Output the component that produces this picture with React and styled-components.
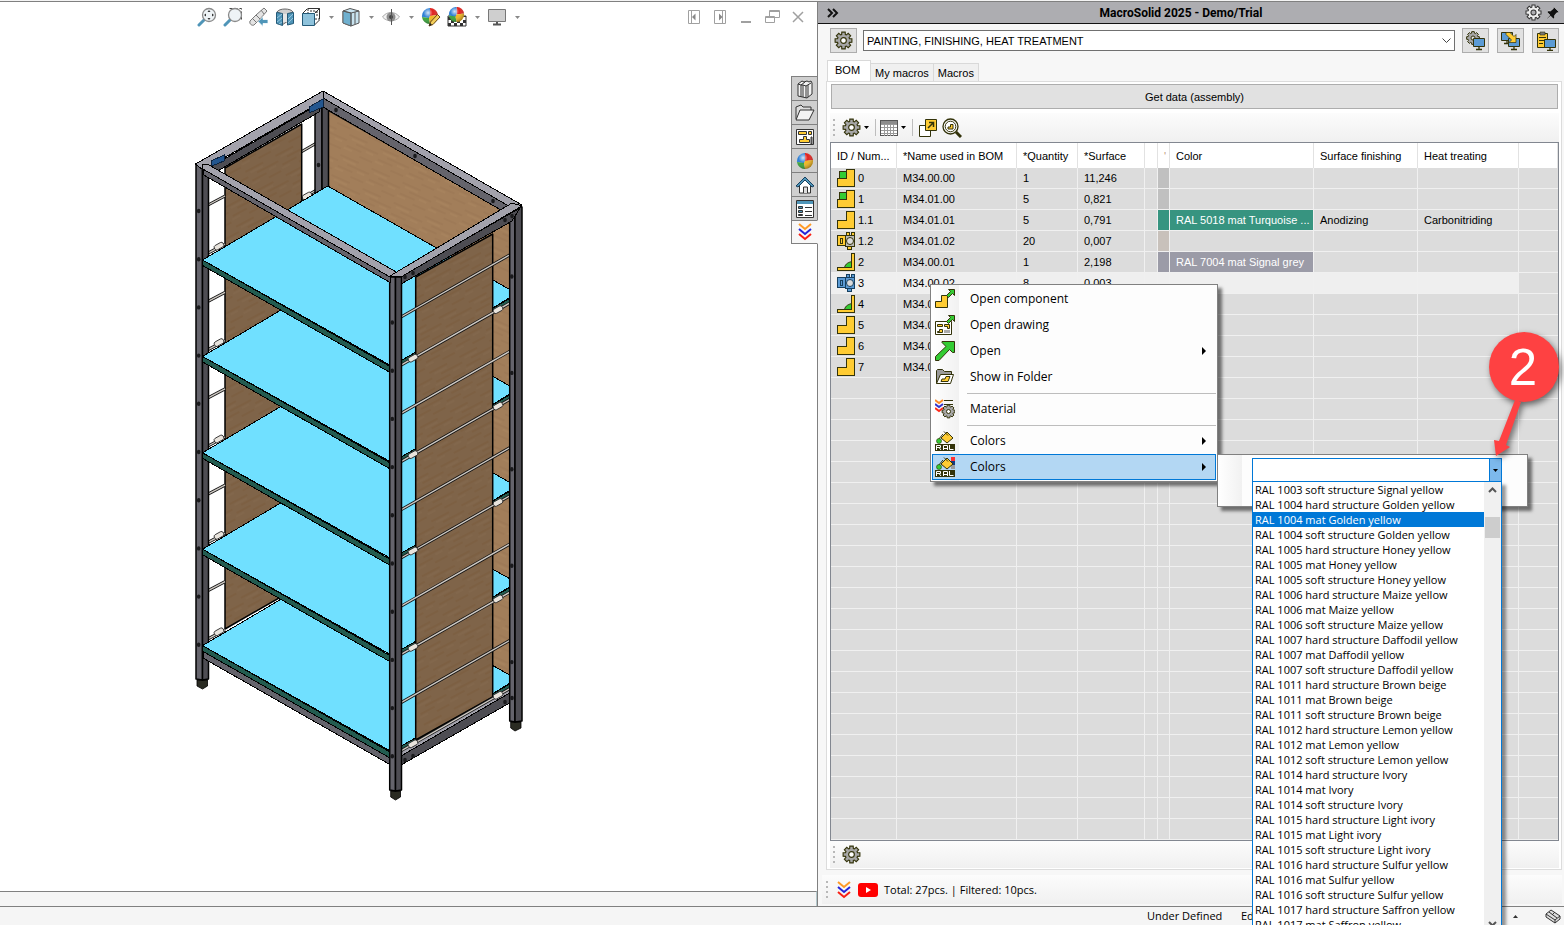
import React from "react";
import styled, { createGlobalStyle, css } from "styled-components";

const ui = '"Open Sans", "Noto Sans", sans-serif';
const sans = '"Liberation Sans", Arial, sans-serif';

const GlobalStyle = createGlobalStyle`
  * { box-sizing: border-box; }
  body { margin: 0; background: #fff; font: 11px/16px ${sans}; color: #000; }
  button, input, select { font: inherit; color: inherit; margin: 0; border-radius: 0; }
  svg { display: block; flex: none; }
`;

const App_ = styled.div`
  height: 100vh;
  display: grid;
  grid-template-rows: minmax(0, 1fr) 19px;
  overflow: hidden;
`;
const Main = styled.main`
  display: grid;
  grid-template-columns: minmax(0, 817fr) minmax(0, 747fr);
  border-top: 1px solid #f4f4f4;
`;

/* ---------- model view ---------- */
const View = styled.section`
  display: flex;
  flex-direction: column;
  min-width: 0;
  border-top: 1px solid #808080;
`;
const ViewBar = styled.div`
  display: flex;
  justify-content: space-between;
  padding: 2px 6px 0 194px;
`;
const Group = styled.div`
  display: flex;
`;
const Plain = styled.button`
  display: flex;
  align-items: center;
  justify-content: center;
  width: ${(p) => p.$w || 26}px;
  height: 26px;
  padding: 0;
  border: 0;
  background: none;
`;
const ViewBody = styled.div`
  flex: 1;
  min-height: 0;
  display: flex;
  justify-content: space-between;
  align-items: flex-start;
`;
const Stage = styled.div`
  padding: 60px 0 0 194px;
`;
const TaskTabs = styled.nav`
  position: relative;
  z-index: 1;
  margin: 46px -1px 0 0;
  width: 27px;
  border-left: 1px solid #808080;
`;
const TaskTab = styled.button`
  display: flex;
  align-items: center;
  justify-content: center;
  width: 100%;
  height: 24px;
  padding: 0;
  border: solid #808080;
  border-width: 1px 1px 0 0;
  background: ${(p) => (p.$on ? "#f7f7f7" : "#cfcfcf")};
  ${(p) => p.$on && css`border-right-color: #f7f7f7; border-bottom-width: 1px;`}
`;
const ViewFoot = styled.div`
  height: 15px;
  border-top: 1px solid #808080;
  border-right: 1px solid #b4c8cc;
  background: #f5f5f5;
`;

/* ---------- side panel ---------- */
const Panel = styled.aside`
  position: relative;
  display: flex;
  flex-direction: column;
  min-width: 0;
  background: #f7f7f7;
  border-left: 1px solid #808080;
  border-top: 1px solid #808080;
`;
const PanelHead = styled.header`
  display: flex;
  align-items: center;
  height: 22px;
  padding: 0 1px 0 9px;
  background: #adadb1;
  border-bottom: 1px solid #111;
`;
const PanelTitle = styled.h1`
  flex: 1;
  margin: 0;
  text-align: center;
  font: 700 12px/18px Roboto, ${ui};
`;
const HeadButton = styled(Plain)`
  width: 20px;
  height: 20px;
`;
const PickRow = styled.div`
  display: flex;
  align-items: center;
  gap: 8px;
  padding: 4px 5px 7px 12px;
`;
const IconButton = styled.button`
  display: flex;
  align-items: center;
  justify-content: center;
  width: 27px;
  height: 25px;
  padding: 0;
  border: 1px solid #adadad;
  background: #e1e1e1;
`;
const SelectBox = styled.div`
  flex: 1;
  display: grid;
  align-items: center;
  margin: 0 -1px 0 -2px;
  > * { grid-area: 1 / 1; }
  > svg { justify-self: end; margin-right: 4px; pointer-events: none; }
`;
const Select = styled.select`
  appearance: none;
  width: 100%;
  height: 21px;
  padding: 0 3px;
  border: 1px solid #707070;
  background: #fff;
  font: 11px/18px ${sans};
`;
const Tabs = styled.div`
  display: flex;
  align-items: flex-end;
  padding-left: 9px;
  height: 21px;
  position: relative;
  z-index: 1;
`;
const Tab = styled.button`
  height: ${(p) => (p.$on ? 21 : 18)}px;
  padding: ${(p) => (p.$on ? "0 10px 2px 7px" : "0 4px")};
  border: solid #d9d9d9;
  border-width: 1px 1px 0 ${(p) => (p.$on ? 1 : 0)}px;
  background: ${(p) => (p.$on ? "#fff" : "#f0f0f0")};
  white-space: nowrap;
`;
const TabPage = styled.div`
  flex: 1;
  min-height: 0;
  display: flex;
  flex-direction: column;
  margin: 0 2px 0 8px;
  padding: 2px 2px 1px 3px;
  border: 1px solid #dcdcdc;
  background: #fff;
`;
const WideButton = styled.button`
  flex: none;
  height: 25px;
  margin: 0 1px;
  padding: 0;
  border: 1px solid #adadad;
  background: #e1e1e1;
`;
const ToolStrip = styled.div`
  flex: none;
  display: flex;
  align-items: center;
  height: ${(p) => p.$h}px;
  margin-top: ${(p) => p.$mt || 0}px;
  padding-left: 3px;
  background: linear-gradient(#fcfcfc, #f0f0f0);
`;
const Grip = styled.i`
  width: 2px;
  height: 17px;
  margin-right: 6px;
  background: repeating-linear-gradient(#b8b8b8 0 2px, transparent 2px 5px);
`;
const Divider = styled.i`
  width: 1px;
  height: 17px;
  margin: 0 4px;
  background: #bdbdbd;
`;
const GridFrame = styled.div`
  flex: 1;
  min-height: 0;
  overflow: hidden;
  border: 1px solid #828790;
  background: #dcdcdc;
`;
const Grid = styled.table`
  width: 100%;
  table-layout: fixed;
  border-collapse: separate;
  border-spacing: 0;
  line-height: 16px;
`;
const Th = styled.th`
  height: 25px;
  padding: 0 0 0 6px;
  border-right: 1px solid #e2e2e2;
  background: #fff;
  font-weight: 400;
  text-align: left;
  white-space: nowrap;
  overflow: hidden;
  color: ${(p) => (p.$faint ? "#c09a80" : "inherit")};
`;
const Td = styled.td`
  height: 21px;
  padding: 0 0 0 6px;
  border: solid #f0f0f0;
  border-width: 0 1px 1px 0;
  background: ${(p) => p.$bg || (p.$sel ? "#efefef" : "#dcdcdc")};
  color: ${(p) => p.$fg || "#000"};
  white-space: nowrap;
  overflow: hidden;
  &:last-child { border-right: 0; }
`;
const IdCell = styled.div`
  display: flex;
  align-items: center;
  gap: 3px;
`;
const Strip = styled.footer`
  display: flex;
  align-items: center;
  gap: 2px;
  height: 29px;
  margin: 5px 2px 2px 4px;
  padding-left: 4px;
  background: linear-gradient(#fcfcfc, #f0f0f0);
  font: 11px/16px ${ui};
`;

/* ---------- popups ---------- */
const Menu = styled.div`
  position: absolute;
  left: 112px;
  top: 282px;
  width: 288px;
  padding: 1px;
  border: 1px solid #808080;
  background: linear-gradient(90deg, #fff, #f1f1f1 28px, #fdfdfd 28px);
  box-shadow: 4px 4px 3px rgba(0, 0, 0, 0.5);
  font: 12px/24px ${ui};
`;
const MenuItem = styled.button`
  display: flex;
  align-items: center;
  width: 100%;
  height: 26px;
  padding: 0 8px 0 2px;
  border: 1px solid ${(p) => (p.$on ? "#0078d7" : "transparent")};
  background: ${(p) => (p.$on ? "#b3d7f3" : "none")};
  text-align: left;
  white-space: nowrap;
  > span { flex: 1; margin-left: 15px; }
`;
const MenuLine = styled.hr`
  height: 6px;
  margin: 0 0 0 35px;
  border: 0;
  background: linear-gradient(transparent 3px, #bdbdbd 3px 4px, transparent 4px);
`;
const SubMenu = styled.div`
  position: absolute;
  left: 286px;
  bottom: -26px;
  width: 311px;
  height: 53px;
  padding: 3px 25px 0 34px;
  border: 1px solid #808080;
  background: linear-gradient(90deg, #fff, #f1f1f1 24px, #fdfdfd 24px);
  box-shadow: 4px 4px 3px rgba(0, 0, 0, 0.5);
`;
const Combo = styled.div`
  position: relative;
  display: flex;
  height: 24px;
  border: 1px solid #0078d7;
  background: #fff;
`;
const ComboInput = styled.input`
  flex: 1;
  min-width: 0;
  padding: 0 3px;
  border: 0;
  outline: 0;
  background: none;
`;
const ComboButton = styled.button`
  display: flex;
  align-items: center;
  justify-content: center;
  width: 12px;
  padding: 0;
  border: 0;
  border-left: 1px solid #0078d7;
  background: #7db9ec;
`;
const DropList = styled.div`
  position: absolute;
  top: 22px;
  left: -1px;
  right: -1px;
  display: flex;
  border: 1px solid #0078d7;
  background: #fff;
  box-shadow: 4px 4px 3px rgba(0, 0, 0, 0.4);
`;
const Options = styled.ul`
  flex: 1;
  margin: 0;
  padding: 0;
  list-style: none;
  font-size: 11px;
`;
const Option = styled.li`
  height: 15px;
  padding-left: 2px;
  line-height: 15px;
  white-space: nowrap;
  background: ${(p) => (p.$on ? "#0078d7" : "none")};
  color: ${(p) => (p.$on ? "#fff" : "#000")};
`;
const Scroll = styled.div`
  display: flex;
  flex-direction: column;
  align-items: center;
  width: 17px;
  padding: 5px 1px;
  background: #f0f0f0;
`;
const Thumb = styled.i`
  width: 15px;
  height: 21px;
  margin: 24px 0 auto;
  background: #cdcdcd;
`;
const Callout = styled.svg`
  position: absolute;
  right: -37px;
  bottom: 46px;
  overflow: visible;
  pointer-events: none;
  filter: drop-shadow(2px 3px 3px rgba(0, 0, 0, 0.55));
`;

const Status = styled.footer`
  display: flex;
  align-items: center;
  justify-content: flex-end;
  gap: 26px;
  padding-right: 2px;
  border-top: 1px solid #808080;
  background: #f5f5f5;
  font: 11px/16px ${ui};
`;
const StatusTexts = styled.div`
  display: grid;
  grid-template-columns: 76px 246px;
  gap: 18px;
  white-space: nowrap;
`;

/* ---------- icons ---------- */
const INK = "#33330a";
const gear = (c, ro, ri, n = 8) => {
  const pts = [];
  for (let i = 0; i < n; i++) {
    const a = (i * 2 * Math.PI) / n;
    [[-0.3, ri], [-0.2, ro], [0.2, ro], [0.3, ri]].forEach(([d, r]) =>
      pts.push(`${(c + r * Math.sin(a + d)).toFixed(2)} ${(c - r * Math.cos(a + d)).toFixed(2)}`)
    );
  }
  return `M${pts.join("L")}Z`;
};
const Gear = ({ s = 20, fill = "#a6a6a6", ink = INK, hole = "#fff" }) => (
  <svg width={s} height={s} viewBox="0 0 20 20">
    <path d={gear(10, 9, 6.6)} fill={fill} stroke={ink} strokeWidth="1.2" />
    <circle cx="10" cy="10" r="3" fill={hole} stroke={ink} strokeWidth="1.2" />
  </svg>
);
const Down = ({ c = "#000" }) => (
  <svg width="5" height="3"><path d="M0 0h5L2.5 3z" fill={c} /></svg>
);
const RightTri = () => (
  <svg width="5" height="8"><path d="M0 0l4 4-4 4z" /></svg>
);
const Chevrons = ({ w = 16, h = 18 }) => (
  <svg width={w} height={h} viewBox="0 0 16 18" fill="none" strokeWidth="2">
    <path d="M2 1l6 5 6-5" stroke="#ff9a26" />
    <path d="M2 6l6 5 6-5" stroke="#2323d8" />
    <path d="M2 11l6 5 6-5" stroke="#f81f14" />
  </svg>
);
const Part = ({ kind }) => (
  <svg width="18" height="18" viewBox="0 0 18 18" stroke={INK} shapeRendering="crispEdges">
    {(kind === "part" || kind === "asm") && <path d="M.5 9.5h9v-9h8v17H.5z" fill="#ffcc33" />}
    {kind === "asm" && <path d="M2.500 2.500h7v7h-7z" fill="#33cc33" />}
    {kind === "weld" && (
      <>
        <path d="M14.500.5h3v17H.5v-3h14z" fill="#ffcc33" />
        <path d="M7.500 14.500c1-4 4-5 7-6v6z" fill="#33cc33" shapeRendering="auto" />
      </>
    )}
    {(kind === "std" || kind === "stdsel") && (
      <g fill={kind === "std" ? "#ffcc33" : "#5b9bd5"} stroke={kind === "std" ? INK : "#17405f"}>
        <path d="M.5 3.500h8v10h-8zM3.500 6.500h2v5h-2zM9.500.5h3v3h-3zM14.500.5h3v3h-3zM10.500 13.500h4v4h-4z" />
        <path d="M8.500 3.500h9v11h-9z" fill={kind === "std" ? "#b9b9b9" : "#5b9bd5"} />
        <circle cx="13" cy="9" r="3.500" fill="#dcdcdc" shapeRendering="auto" />
      </g>
    )}
  </svg>
);
const TableIcon = () => (
  <svg width="18" height="18" shapeRendering="crispEdges">
    <path d="M.5 1.500h17v15H.5z" fill="#fff" stroke="#555" />
    <path d="M1 2h16v3H1z" fill="#8c8c8c" />
    <path d="M1 5.500h16M1 8.500h16M1 11.500h16M1 14.500h16M4.500 5v12M7.500 5v12M10.500 5v12M13.500 5v12" stroke="#999" />
  </svg>
);
const ExportIcon = () => (
  <svg width="20" height="20" stroke={INK}>
    <path d="M1.500 7.500h11v11h-11z" fill="#fff" />
    <path d="M7.500 1.500h11v11h-11z" fill="#ffcc33" />
    <path d="M10 10l5-5M11 4.500h4.500V9" fill="none" strokeWidth="1.500" />
  </svg>
);
const FindIcon = () => (
  <svg width="20" height="20" fill="none" stroke={INK}>
    <circle cx="8.500" cy="8.500" r="7.500" fill="#fff" strokeWidth="1.300" />
    <circle cx="8.500" cy="8.500" r="5.300" fill="#fff" />
    <path d="M6 9h2.500V6.500H11V11H6z" fill="#ffcc33" />
    <path d="M14 14l5 5" strokeWidth="3" />
  </svg>
);
const Monitor = ({ x = 0, y = 0 }) => (
  <g transform={`translate(${x} ${y})`} stroke={INK}>
    <path d="M.5.5h11v8H.5z" fill="#5b9bd5" />
    <path d="M6 9v2M3 11.500h6" fill="none" strokeWidth="1.300" />
  </g>
);
const GearPc = () => (
  <svg width="20" height="20">
    <path d={gear(7, 6.500, 5)} fill="#a6a6a6" stroke={INK} />
    <circle cx="7" cy="7" r="2" fill="#e1e1e1" stroke={INK} />
    <Monitor x={7} y={7} />
  </svg>
);
const SwapPc = () => (
  <svg width="20" height="20">
    <Monitor x={0} y={1} />
    <Monitor x={7} y={7} />
    <path d="M5 1.500h4l4 4 2-2v8H8l2.500-2.500L5 3.500z" fill="#ffcc33" stroke={INK} strokeWidth=".7" />
  </svg>
);
const ClipPc = () => (
  <svg width="20" height="20">
    <path d="M1.500 2.500h10v14h-10z" fill="#ffcc33" stroke={INK} />
    <path d="M4 1h5v3H4z" fill="#777" stroke={INK} strokeWidth=".6" />
    <path d="M3 6.500h7M3 9.500h5M3 12.500h4" stroke={INK} />
    <Monitor x={8} y={8} />
  </svg>
);
const GreenArrow = ({ d }) => <path d={d} fill="#33cc33" stroke={INK} />;
const MenuIcon = ({ kind }) => (
  <svg width="20" height="22" viewBox="0 0 20 22">
    {kind === "component" && (
      <>
        <path d="M.5 13.500h6v-6h6v12H.5z" fill="#ffcc33" stroke={INK} />
        <GreenArrow d="M11.500 7.500l4-4-2-2h6v6l-2-2-4 4z" />
      </>
    )}
    {kind === "drawing" && (
      <>
        <path d="M.5 7.500h16v13H.5z" fill="#fff" stroke={INK} />
        <path d="M2.500 10.500h5v2h-5zM9.500 10.500h5v4h-2v-2h-3zM2.500 17.500h2v-2h3v3h-5z" fill="#ffcc33" stroke={INK} />
        <path d="M9 16h6v3H9z" fill="#aaa" />
        <GreenArrow d="M11.500 7.500l4-4-2-2h6v6l-2-2-4 4z" />
      </>
    )}
    {kind === "open" && <GreenArrow d="M.5 20.500v-4L11 6.500l-4-4V1.500h12.500v11h-2l-3-3L4 20.500z" />}
    {kind === "folder" && (
      <>
        <path d="M1.500 17.500v-13l1-1h5l2 2h7v4" fill="#9b9b9b" stroke={INK} />
        <path d="M1.500 17.500l4-9h13l-3 9z" fill="#fff" stroke={INK} />
        <path d="M6 15.500l1-2.500h3l1-2.500h4l-2 5z" fill="#ffcc33" stroke={INK} />
      </>
    )}
    {kind === "material" && (
      <>
        <g fill="none" strokeWidth="2">
          <path d="M0 2l4 3 4-3" stroke="#ff8a26" />
          <path d="M0 6l4 3 4-3" stroke="#3333cc" />
          <path d="M0 10l4 3 4-3" stroke="#ff2a1a" />
        </g>
        <path d="M9 2.500h9M9 6.500h9" stroke={INK} />
        <path d={gear(13.500, 6.500, 5)} fill="#a6a6a6" stroke={INK} />
        <circle cx="13.500" cy="13.500" r="2" fill="#fff" stroke={INK} />
      </>
    )}
    {(kind === "ral" || kind === "ralset") && (
      <>
        {kind === "ralset" && (
          <>
            <path d="M16 1h4v4h-4z" fill="#ff3030" />
            <path d="M16 5h4v4h-4z" fill="#123a80" />
            <path d="M16 9h4v4h-4z" fill="#9a9a9a" />
          </>
        )}
        <path d="M12 2l6 6-6 5-6-5z" fill="#ffcc33" stroke={INK} />
        <path d="M9 1.500l4 4" stroke={INK} fill="none" />
        <path d="M8 4L3 10" stroke={INK} fill="none" />
        <circle cx="4" cy="11" r="2.500" fill="#33cc33" stroke={INK} strokeWidth=".6" />
        <path d="M0 14h20v7H0z" fill={INK} />
        <g stroke="#fff" fill="none">
          <path d="M1.500 20v-4.500h4v2h-4M4 17.500l2 2.500M8.500 20v-4.500h4V20M8.500 18.500h4M14.500 15v4.500h4" />
        </g>
      </>
    )}
  </svg>
);
const Ball = ({ s = 18 }) => (
  <svg width={s} height={s} viewBox="0 0 18 18">
    <defs>
      <radialGradient id="gloss" cx=".38" cy=".3" r=".75">
        <stop offset="0" stopColor="#fff" stopOpacity=".8" />
        <stop offset=".4" stopColor="#fff" stopOpacity="0" />
        <stop offset="1" stopColor="#000" stopOpacity=".4" />
      </radialGradient>
    </defs>
    <path d="M9 9V1a8 8 0 0 1 8 7z" fill="#e0201c" />
    <path d="M9 1v8l-1 2-7-1a8 8 0 0 1 8-9z" fill="#2d7fd6" />
    <path d="M1 10l7 1 1 6a8 8 0 0 1-8-7z" fill="#35a435" />
    <path d="M9 17l-1-6 1-2 8-1a8 8 0 0 1-8 9z" fill="#f2b61c" />
    <circle cx="9" cy="9" r="8" fill="url(#gloss)" />
  </svg>
);
const ViewIcon = ({ kind }) => (
  <svg width="20" height="20" viewBox="0 0 20 20" fill="none" stroke="#666">
    {(kind === "fit" || kind === "area") && (
      <>
        {kind === "area" && <path d="M6.500 1.500h12v12" stroke="#444" strokeDasharray="3 2" />}
        <path d="M2 18l5-5" stroke="#4f95b8" strokeWidth="3" strokeLinecap="round" />
        <circle cx="12" cy="8" r="6.500" fill="#eef3f6" stroke="#8a8a8a" strokeWidth="1.300" />
        {kind === "fit" && <path d="M12 3l1.500 2h-3zM12 13l1.500-2h-3zM7 8l2-1.500v3zM17 8l-2-1.500v3z" fill="#333" stroke="none" />}
      </>
    )}
    {kind === "prev" && (
      <>
        <path d="M1 14l6-6 8-7 3 3-7 8-6 6c-2 1-5-1-4-4z" fill="#e4e4e4" stroke="#777" />
        <path d="M7 8l4 4M12 3l3 4M4 12l3 3" stroke="#777" />
        <path d="M9 14.500l5-5v3h5v4h-5v3z" fill="#4f95b8" stroke="#fff" strokeWidth=".8" />
      </>
    )}
    {kind === "section" && (
      <>
        <path d="M2 5c2-4 14-4 16 0l-5 2v7l-6 4V7z" fill="#cfcfcf" stroke="#666" />
        <path d="M7 7h6v8H7z" fill="#e6e6e6" stroke="none" />
        <path d="M1.500 5.500l6 1v12l-6-2zM12.500 6.500l6-1v11l-6 1.500z" fill="#4f95b8" stroke="#245a78" />
        <path d="M2 11l5-4M2 15l5-4M4 17l3-2M13 12l5-5M13 16l5-5" stroke="#a8d0e4" strokeWidth=".8" />
      </>
    )}
    {kind === "orient" && (
      <>
        <path d="M7 1.500h11.500v11M1.500 6.500l5-5M18.500 1.500l-5 5M18.500 13l-5 5" stroke="#333" />
        <path d="M7 2v4M14 12h4M9 4h6v2M16 4v6" stroke="#333" strokeDasharray="2 1" />
        <path d="M1.500 6.500h12v12h-12z" fill="#8fc3dc" stroke="#245a78" />
      </>
    )}
    {kind === "style" && (
      <>
        <path d="M2 4l7-2.500L18 4v12l-8 3-8-3z" fill="#c9e4f0" stroke="#555" />
        <path d="M2 4l8 2v13l-8-3z" fill="#6fb0cf" />
        <path d="M2 4l8 2 8-2M10 6v13M14 5v12" stroke="#555" />
      </>
    )}
    {kind === "eye" && (
      <>
        <path d="M1.500 10c4-6 13-6 17 0-4 5-13 5-17 0z" fill="#f2f2f2" stroke="#aaa" />
        <circle cx="10" cy="10" r="4.500" fill="#8d8d8d" stroke="none" />
        <circle cx="10" cy="10" r="2" fill="#444" stroke="none" />
        <path d="M10.500 2v16" stroke="#555" />
      </>
    )}
    {kind === "screen" && (
      <>
        <path d="M1.500 2.500h17v12h-17z" fill="#cfcfcf" stroke="#777" />
        <path d="M10 15v2M6 17.500h8" strokeWidth="2" stroke="#555" />
      </>
    )}
  </svg>
);
const BallPencil = () => (
  <svg width="20" height="20" viewBox="0 0 20 20">
    <Ball />
    <path d="M8 19l1.500-4 7-7.500L19 10l-7 7.500z" fill="#f4cf5a" stroke="#6b4a18" />
    <path d="M8 19l1-3 2 1.500z" fill="#222" />
  </svg>
);
const BallScene = () => (
  <svg width="20" height="20" viewBox="0 0 20 20">
    <path d="M1 9h18v10H1z" fill="#fff" stroke="#333" />
    <path d="M1 10h3v3H1zM4 13h3v3H4zM1 16h3v3H1zM7 16h3v3H7zM10 13h3v3h-3zM13 16h3v3h-3zM16 13h3v3h-3zM16 9h3v1h-3z" fill="#333" />
    <g transform="translate(1 -1)"><Ball s={17} /></g>
  </svg>
);
const WinIcon = ({ kind }) => (
  <svg width="16" height="16" viewBox="0 0 16 16" fill="none" stroke="#a0a0a0">
    {kind === "left" && <><path d="M2.500 1.500h11v13h-11zM5.500 2v12" /><path d="M9.500 4.500v7L6 8z" fill="#888" stroke="none" /></>}
    {kind === "right" && <><path d="M2.500 1.500h11v13h-11zM10.500 2v12" /><path d="M7 4.500v7L10.500 8z" fill="#888" stroke="none" /></>}
    {kind === "min" && <path d="M3 13h10" strokeWidth="2" />}
    {kind === "max" && <path d="M1.500 7.500h9v6h-9zM5.500 7V1.500h10v7H11M1.500 8.500h9M5.500 2.500h10" />}
    {kind === "close" && <path d="M3 3l10 10M13 3L3 13" strokeWidth="1.500" />}
  </svg>
);
const TaskIcon = ({ kind }) => {
  if (kind === "ball") return <Ball />;
  if (kind === "macro") return <Chevrons w={16} h={18} />;
  return (
    <svg width="20" height="20" viewBox="0 0 20 20" fill="none" stroke="#333">
      {kind === "books" && (
        <>
          <path d="M3 5l4-3 2 1 3-1 2 1 2-1 1 2v11l-5 4-9-2z" fill="#f2f2f2" />
          <path d="M3 5l3 1v12M6 6l4-3M8 6l3 1v12M8 6v12M11 7l5-3M13 6v12M6 6l2 0" />
        </>
      )}
      {kind === "folder" && (
        <>
          <path d="M1 16V4l5-2 2 2h8v3" fill="#ddd" />
          <path d="M1 17L5 7h14l-5 10z" fill="#f3f3f3" />
        </>
      )}
      {kind === "layout" && (
        <>
          <path d="M1.500 2.500h17v15h-17z" fill="#fff" />
          <path d="M3.500 4.500h8v3h-8zM13.500 4.500h3v3h-3zM8.500 9.500h3v3h3v3h-10v-3h4z" fill="#ffcc33" />
          <path d="M16 10h1v7h-1z" fill="#aaa" />
        </>
      )}
      {kind === "home" && (
        <>
          <path d="M4.500 9v9h11V9L10 4z" fill="#fff" />
          <path d="M1 11L10 2l9 9-2 1-7-7-7 7z" fill="#4f95b8" stroke="#17405f" />
          <path d="M8.500 18v-6h4v6" fill="#ddd" />
        </>
      )}
      {kind === "list" && (
        <>
          <path d="M1.500 1.500h17v17h-17z" fill="#fff" />
          <path d="M2 2h16v3H2z" fill="#4f95b8" stroke="none" />
          <path d="M3.500 7.500h4v2h-4zM3.500 11.500h4v2h-4zM3.500 15.500h4v1h-4z" fill="#4f95b8" />
          <path d="M10 8.500h7M10 12.500h7M10 16.500h7" />
        </>
      )}
    </svg>
  );
};

/* ---------- rack model ---------- */
const CYAN = "#70e0ff";
const GREEN = "#235c50";
const LIGHT = "#a3a2ac";
const MID = "#65646c";
const DARK = "#4e4d53";
const seq = (n) => Array.from({ length: n }, (_, i) => i);
const shift = (pts, dy = 0) => pts.map(([x, y]) => `${x},${y + dy}`).join(" ");
const Face = ({ p, dy, fill, w = 1 }) => (
  <polygon points={shift(p, dy)} fill={fill} stroke="#000" strokeWidth={w} strokeLinejoin="round" />
);
const Rod = ({ x1, y1, x2, y2 }) => (
  <>
    <line x1={x1} y1={y1} x2={x2} y2={y2} stroke="#111" strokeWidth="3" />
    <line x1={x1} y1={y1} x2={x2} y2={y2} stroke="#cfcac4" strokeWidth="1.400" />
  </>
);
const Cuff = ({ x, y }) => (
  <rect x={x - 5} y={y - 2.500} width="10" height="5" rx="2" fill="#e9e4dd" stroke="#222" strokeWidth=".8" transform={`rotate(-29 ${x} ${y})`} />
);
const Bolt = ({ x, y }) => <ellipse cx={x} cy={y} rx="1.800" ry="2.200" fill="#1a1a1c" />;
const Post = ({ x, mid, right, top, bottom }) => (
  <>
    <path d={`M${x + 1} ${bottom}H${right - 1}v6L${mid} ${bottom + 9}L${x + 1} ${bottom + 6}z`} fill="#2a2b22" stroke="#000" strokeWidth=".8" />
    <Face p={[[x, top], [mid, top], [mid, bottom], [x, bottom - 1]]} fill={MID} w={1.500} />
    <Face p={[[mid, top], [right, top], [right, bottom - 1], [mid, bottom]]} fill={DARK} w={1.500} />
  </>
);
const Rack = () => (
  <svg width="330" height="712" viewBox="194 90 330 712" role="img" aria-label="Rack assembly">
    <defs>
      <pattern id="grainBack" width="34" height="22" patternUnits="userSpaceOnUse" patternTransform="rotate(24)">
        <rect width="34" height="22" fill="#a27e5a" />
        <path d="M0 3h20M10 9h24M2 14h16M18 19h14" stroke="#977350" strokeWidth=".7" />
        <path d="M4 6h14M22 12h8M0 17h9" stroke="#ac8862" strokeWidth=".8" />
      </pattern>
      <pattern id="grainSide" width="34" height="22" patternUnits="userSpaceOnUse" patternTransform="rotate(-28)">
        <rect width="34" height="22" fill="#7f6449" />
        <path d="M0 3h20M10 9h24M2 14h16M18 19h14" stroke="#785936" strokeWidth=".7" />
        <path d="M4 6h14M22 12h8M0 17h9" stroke="#876b4f" strokeWidth=".7" />
      </pattern>
    </defs>

    <Face p={[[327, 110], [510, 214], [510, 676], [327, 570]]} fill="url(#grainBack)" />
    <Rod x1={301} y1={152} x2={320} y2={141} />
    <Rod x1={301} y1={199} x2={320} y2={188} />
    <Cuff x={307} y={196} />
    <Face p={[[225, 168], [301.700, 124], [301.700, 585], [225, 629]]} fill="url(#grainSide)" w={1.500} />
    {seq(10).map((k) => (
      <g key={k}>
        <Rod x1={208} y1={205 + 48.200 * k} x2={225} y2={196 + 48.200 * k} />
        {k % 2 === 1 && <Cuff x={219} y={198 + 48.200 * k} />}
      </g>
    ))}
    <Face p={[[315, 104], [322, 104], [322, 190], [315, 194]]} fill={MID} w={1.500} />
    <Face p={[[322, 104], [328.500, 104], [328.500, 187], [322, 190]]} fill={DARK} w={1.500} />
    <Bolt x={318.500} y={165} />
    <Post x={196} mid={202.500} right={208.500} top={165} bottom={680} />

    <g shapeRendering="crispEdges">
      <Face p={[[203, 651], [390, 758], [390, 764.500], [203, 658]]} fill={MID} />
      <Face p={[[401, 749], [513, 685], [513, 691], [401, 756]]} fill={LIGHT} />
      <Face p={[[401, 756], [513, 691], [513, 701], [401, 765]]} fill={DARK} />
      {seq(5).map((i) => {
        const dy = 96.400 * (4 - i);
        return (
          <g key={i}>
            <Face p={[[202.500, 260], [327.700, 186], [514, 292], [514, 295], [395, 368]]} dy={dy} fill={CYAN} />
            <Face p={[[202.500, 260], [391, 367], [391, 373], [202.500, 265.500]]} dy={dy} fill={GREEN} />
            <Face p={[[395, 364], [514, 296], [514, 301], [395, 369]]} dy={dy} fill={GREEN} />
          </g>
        );
      })}
    </g>

    <Face p={[[415.700, 277], [492.700, 234], [492.700, 697], [415.700, 740]]} fill="url(#grainSide)" w={1.500} />
    {seq(10).map((k) => (
      <g key={k}>
        <Rod x1={401} y1={317 + 48.200 * k} x2={513} y2={253 + 48.200 * k} />
        {k % 2 === 1 && (
          <>
            <Cuff x={413} y={310 + 48.200 * k} />
            <Cuff x={498} y={261.500 + 48.200 * k} />
          </>
        )}
      </g>
    ))}

    <Post x={509.700} mid={515} right={522} top={207} bottom={722} />
    <Post x={389.700} mid={395.500} right={401.500} top={277} bottom={791} />

    <g shapeRendering="crispEdges">
      <Face p={[[209, 168], [319, 104], [319, 112], [209, 176]]} fill={DARK} />
      <Face p={[[195.500, 164], [323, 91], [328, 98], [203, 170]]} fill={LIGHT} />
      <Face p={[[323, 98], [512, 206], [506, 213], [323, 107]]} fill={MID} />
      <Face p={[[323, 91], [522, 205], [512, 208], [323, 98]]} fill={LIGHT} />
      <path d="M309 107l14-8v8l-14 6zM211 161l13-6v6l-12 5z" fill="#23568f" stroke="#0d2440" />
      <Face p={[[203, 168], [390, 276], [390, 282.500], [203, 174.500]]} fill={MID} />
      <Face p={[[202, 164], [209, 165], [398, 273], [390, 277], [202, 168.500]]} fill={LIGHT} />
      <Face p={[[401, 276], [520, 208], [512, 221], [401, 284]]} fill={DARK} />
      <Face p={[[390, 276], [512, 203], [522, 206], [401, 277]]} fill={LIGHT} />
    </g>

    {seq(10).map((k) => <Bolt key={k} x={198.700} y={211 + 48.200 * k} />)}
    {seq(10).map((k) => <Bolt key={k} x={392.300} y={322.500 + 48.200 * k} />)}
    {seq(5).map((k) => <Bolt key={k} x={511.800} y={276.500 + 96.400 * k} />)}
    {[[336, 110], [415, 156], [493, 201], [405, 277], [413, 273], [505, 220], [512, 216], [405, 760], [413, 756], [505, 702], [512, 698]].map(([x, y]) => (
      <Bolt key={`${x}-${y}`} x={x} y={y} />
    ))}
  </svg>
);

/* ---------- data ---------- */
const columns = [
  ["ID / Num...", 66], ["*Name used in BOM", 120], ["*Quantity", 61], ["*Surface", 67], ["", 13],
  ["'", 12], ["Color", 144], ["Surface finishing", 104], ["Heat treating", 101], ["", 0],
];
const rows = [
  { icon: "asm", id: "0", name: "M34.00.00", qty: "1", area: "11,246", chip: "#c0c0c0" },
  { icon: "asm", id: "1", name: "M34.01.00", qty: "5", area: "0,821", chip: "#c0c0c0" },
  { icon: "part", id: "1.1", name: "M34.01.01", qty: "5", area: "0,791", chip: "#379480", color: "RAL 5018 mat Turquoise ...", finish: "Anodizing", heat: "Carbonitriding" },
  { icon: "std", id: "1.2", name: "M34.01.02", qty: "20", area: "0,007", chip: "#c8c1bb" },
  { icon: "weld", id: "2", name: "M34.00.01", qty: "1", area: "2,198", chip: "#9b9ba7", color: "RAL 7004 mat Signal grey" },
  { icon: "stdsel", id: "3", name: "M34.00.02", qty: "8", area: "0,003", sel: true },
  { icon: "weld", id: "4", name: "M34.00.03" },
  { icon: "part", id: "5", name: "M34.00.04" },
  { icon: "part", id: "6", name: "M34.00.05" },
  { icon: "part", id: "7", name: "M34.00.06" },
  ...seq(22).map(() => ({})),
];
const shades = [
  ["1004", "Golden yellow"], ["1005", "Honey yellow"], ["1006", "Maize yellow"], ["1007", "Daffodil yellow"],
  ["1011", "Brown beige"], ["1012", "Lemon yellow"], ["1014", "Ivory"], ["1015", "Light ivory"], ["1016", "Sulfur yellow"],
];
const options = [
  "RAL 1003 soft structure Signal yellow",
  ...shades.flatMap(([n, s]) => ["hard structure", "mat", "soft structure"].map((t) => `RAL ${n} ${t} ${s}`)),
  "RAL 1017 hard structure Saffron yellow",
  "RAL 1017 mat Saffron yellow",
];
const menu = [
  ["component", "Open component"], ["drawing", "Open drawing"], ["open", "Open", true], ["folder", "Show in Folder"],
  null, ["material", "Material"], null, ["ral", "Colors", true], ["ralset", "Colors", true, true],
];
const viewTools = [["fit"], ["area"], ["prev"], ["section"], ["orient", 1], ["style", 1], ["eye", 1], ["ballpencil"], ["scene", 1], ["screen", 1]];

const BomGrid = () => (
  <GridFrame>
    <Grid>
      <colgroup>
        {columns.map(([, w], i) => <col key={i} width={w || undefined} />)}
      </colgroup>
      <thead>
        <tr>{columns.map(([t], i) => <Th key={i} $faint={i === 5}>{t}</Th>)}</tr>
      </thead>
      <tbody>
        {rows.map((r, i) => (
          <tr key={i}>
            <Td $sel={r.sel}>{r.id && <IdCell><Part kind={r.icon} />{r.id}</IdCell>}</Td>
            <Td $sel={r.sel}>{r.name}</Td>
            <Td $sel={r.sel}>{r.qty}</Td>
            <Td $sel={r.sel}>{r.area}</Td>
            <Td $sel={r.sel} />
            <Td $sel={r.sel} $bg={r.chip} />
            <Td $sel={r.sel} $bg={r.color && r.chip} $fg={r.color && "#fff"}>{r.color}</Td>
            <Td $sel={r.sel}>{r.finish}</Td>
            <Td $sel={r.sel}>{r.heat}</Td>
            <Td />
          </tr>
        ))}
      </tbody>
    </Grid>
  </GridFrame>
);

const ColorPicker = () => (
  <SubMenu>
    <Combo>
      <ComboInput aria-label="Color" role="combobox" aria-expanded="true" aria-controls="ral-list" />
      <ComboButton aria-label="Show colors"><Down /></ComboButton>
      <DropList>
        <Options id="ral-list" role="listbox" aria-label="RAL colors">
          {options.map((o) => {
            const on = o === "RAL 1004 mat Golden yellow";
            return <Option key={o} role="option" aria-selected={on} $on={on}>{o}</Option>;
          })}
        </Options>
        <Scroll>
          <svg width="9" height="6" fill="none" stroke="#555" strokeWidth="2"><path d="M1 5l3.500-3.500L8 5" /></svg>
          <Thumb />
          <svg width="9" height="6" fill="none" stroke="#555" strokeWidth="2"><path d="M1 1l3.500 3.500L8 1" /></svg>
        </Scroll>
      </DropList>
    </Combo>
    <Callout width="80" height="130" viewBox="1484 330 80 130">
      <path d="M1515 400l6 2-15 43 4 2-14 9-2-16 5 1z" fill="#fe4142" />
      <circle cx="1524" cy="367" r="35" fill="#fe4142" />
      <text x="1523" y="385" textAnchor="middle" fontFamily="Liberation Sans, Arial, sans-serif" fontSize="51" fill="#fff">2</text>
    </Callout>
  </SubMenu>
);

export default function App() {
  return (
    <App_>
      <GlobalStyle />
      <Main>
        <View>
          <ViewBar>
            <Group>
              {viewTools.map(([k, more]) => (
                <React.Fragment key={k}>
                  <Plain aria-label={k}>
                    {k === "ballpencil" ? <BallPencil /> : k === "scene" ? <BallScene /> : <ViewIcon kind={k} />}
                  </Plain>
                  {more && <Plain $w={14} aria-label={`${k} options`}><Down c="#888" /></Plain>}
                </React.Fragment>
              ))}
            </Group>
            <Group>
              {["left", "right", "min", "max", "close"].map((k) => <Plain key={k} aria-label={k}><WinIcon kind={k} /></Plain>)}
            </Group>
          </ViewBar>
          <ViewBody>
            <Stage><Rack /></Stage>
            <TaskTabs>
              {["books", "folder", "layout", "ball", "home", "list", "macro"].map((k) => (
                <TaskTab key={k} $on={k === "macro"} aria-label={k}><TaskIcon kind={k} /></TaskTab>
              ))}
            </TaskTabs>
          </ViewBody>
          <ViewFoot />
        </View>

        <Panel>
          <PanelHead>
            <svg width="12" height="10" fill="none" stroke="#111" strokeWidth="2"><path d="M1 1l4 4-4 4M6 1l4 4-4 4" /></svg>
            <PanelTitle>MacroSolid 2025 - Demo/Trial</PanelTitle>
            <HeadButton aria-label="Settings"><Gear s={17} fill="#eee" ink="#333" hole="#adadb1" /></HeadButton>
            <HeadButton aria-label="Pin">
              <svg width="14" height="14"><path d="M8 1l5 5-1 1-1-.5-2.500 3 0 2.500-1 1-3-3L1 13l-.5-.5L4 9 1 6l1-1 2.500 0 3-2.500L7 2z" fill="#111" stroke="#fff" strokeWidth=".4" /></svg>
            </HeadButton>
          </PanelHead>
          <PickRow>
            <IconButton aria-label="Profile settings"><Gear s={19} /></IconButton>
            <SelectBox>
              <Select aria-label="Macro profile" defaultValue="p"><option value="p">PAINTING, FINISHING, HEAT TREATMENT</option></Select>
              <svg width="9" height="6" fill="none" stroke="#444"><path d="M.5.5l4 4 4-4" /></svg>
            </SelectBox>
            <IconButton aria-label="Configure"><GearPc /></IconButton>
            <IconButton aria-label="Transfer"><SwapPc /></IconButton>
            <IconButton aria-label="Paste"><ClipPc /></IconButton>
          </PickRow>
          <Tabs role="tablist">
            <Tab role="tab" aria-selected="true" $on>BOM</Tab>
            <Tab role="tab" aria-selected="false">My macros</Tab>
            <Tab role="tab" aria-selected="false">Macros</Tab>
          </Tabs>
          <TabPage>
            <WideButton>Get data (assembly)</WideButton>
            <ToolStrip $h={29} $mt={4}>
              <Grip />
              <Plain $w={20} aria-label="Options"><Gear s={19} /></Plain>
              <Plain $w={10} aria-label="More options"><Down /></Plain>
              <Divider />
              <Plain $w={18} aria-label="Columns"><TableIcon /></Plain>
              <Plain $w={10} aria-label="More columns"><Down /></Plain>
              <Divider />
              <Plain $w={22} aria-label="Export"><ExportIcon /></Plain>
              <Plain aria-label="Find"><FindIcon /></Plain>
            </ToolStrip>
            <BomGrid />
            <ToolStrip $h={27}>
              <Grip />
              <Plain $w={20} aria-label="Grid settings"><Gear s={19} /></Plain>
            </ToolStrip>
          </TabPage>
          <Strip>
            <Grip />
            <Chevrons w={16} h={18} />
            <Plain $w={28} aria-label="Video">
              <svg width="20" height="14"><rect width="20" height="14" rx="3" fill="#f00" /><path d="M8 4l5 3-5 3z" fill="#fff" /></svg>
            </Plain>
            <span>Total: 27pcs. | Filtered: 10pcs.</span>
          </Strip>

          <Menu>
            {menu.map((m, i) =>
              m ? (
                <MenuItem key={i} $on={m[3]}>
                  <MenuIcon kind={m[0]} />
                  <span>{m[1]}</span>
                  {m[2] && <RightTri />}
                </MenuItem>
              ) : (
                <MenuLine key={i} />
              )
            )}
            <ColorPicker />
          </Menu>
        </Panel>
      </Main>
      <Status>
        <StatusTexts>
          <span>Under Defined</span>
          <span>Editing</span>
        </StatusTexts>
        <svg width="5" height="3"><path d="M0 3h5L2.500 0z" fill="#333" /></svg>
        <svg width="18" height="16" fill="#ddd" stroke="#333"><path d="M2 6l5-4 9 6v3l-5 4-9-6z" /><path d="M2 6l9 6 5-4M11 12v3M5 4l8 6M8 7l3-3" fill="none" /></svg>
      </Status>
    </App_>
  );
}
